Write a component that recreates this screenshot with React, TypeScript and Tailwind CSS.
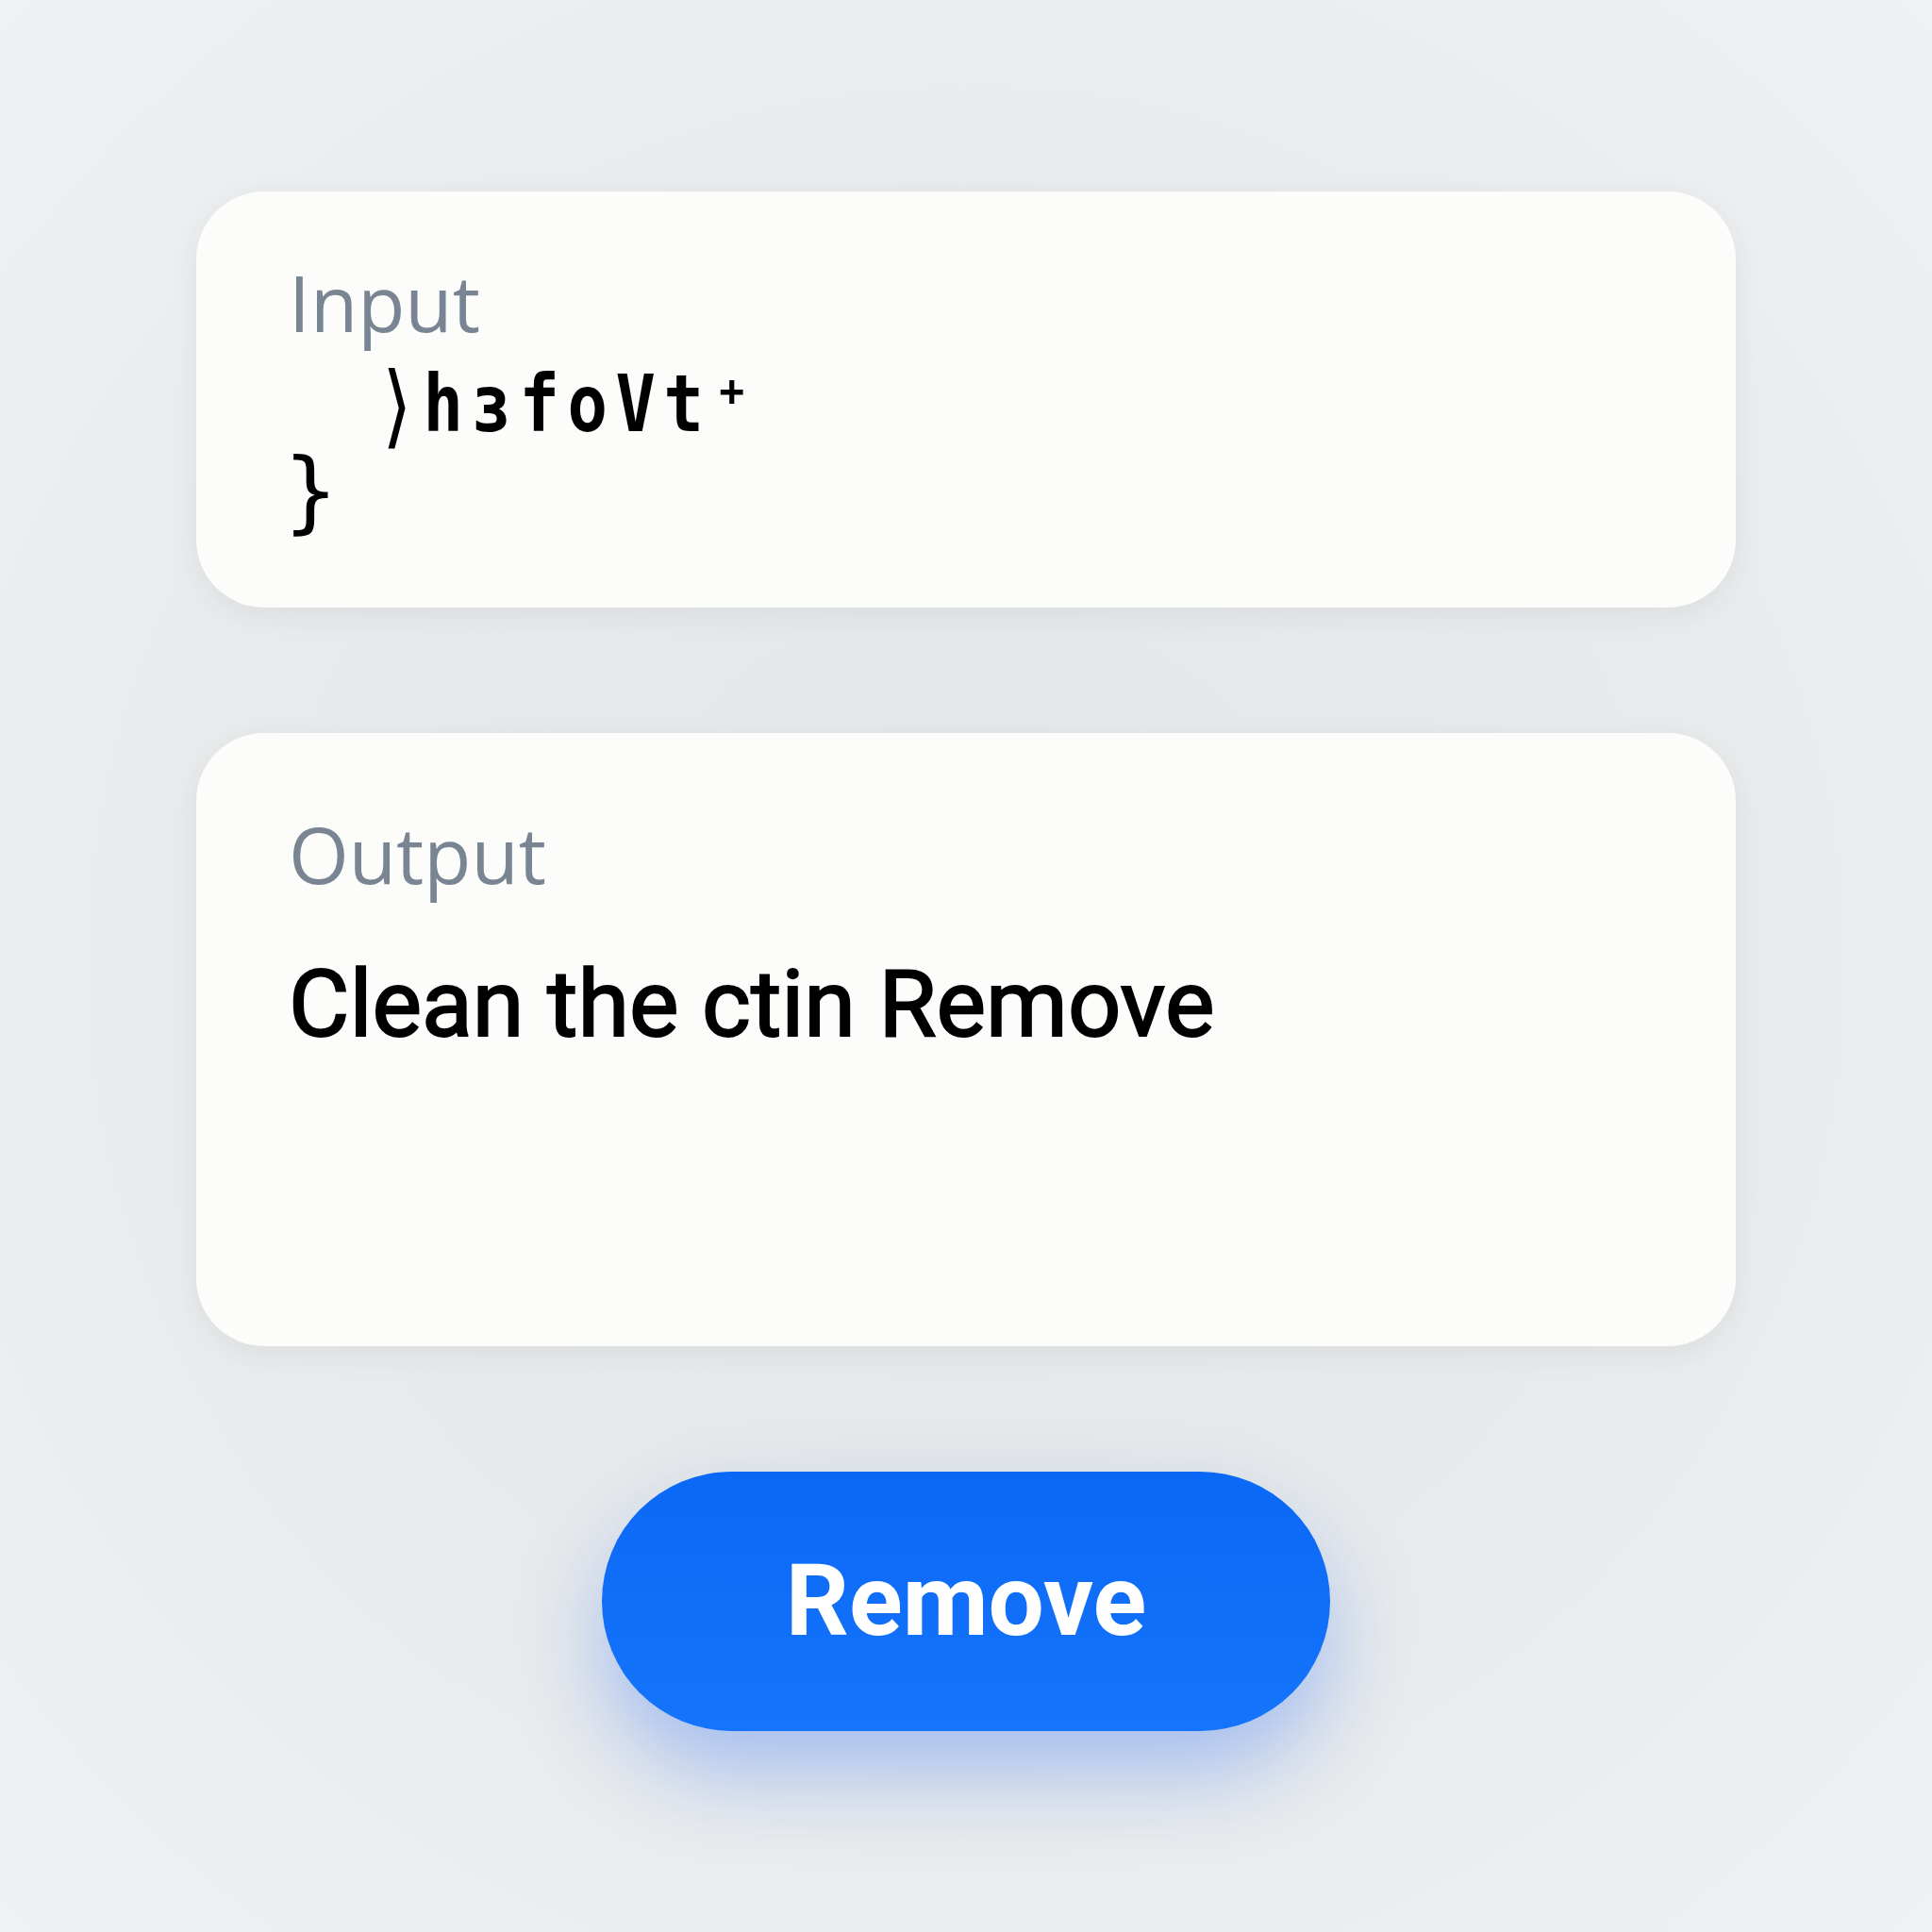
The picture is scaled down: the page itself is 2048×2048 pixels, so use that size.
import React from "react";

// Input / Output panel with a cleanup action button

const label = "font-['Open_Sans',sans-serif] text-[82px] leading-none text-[#7a8593]";

function Panel({ title, className, children }: { title: string; className: string; children: React.ReactNode }) {
  return (
    <section
      className={`w-[1632px] rounded-[72px] bg-[#fcfcfa] pl-[98px] shadow-[0_8px_30px_rgba(60,70,80,0.07)] ${className}`}
    >
      <h2 className={label}>{title}</h2>
      {children}
    </section>
  );
}

export default function App() {
  return (
    <div className="min-h-screen w-full flex flex-col items-center pt-[203px] bg-[radial-gradient(ellipse_at_center,#e4e6e7_0%,#e8eaeb_55%,#eff1f2_100%)]">
      {/* input */}
      <Panel title="Input" className="h-[441px] pt-[76px]">
        <div className="mt-[26px] ml-[90px] h-[83px] font-['DejaVu_Sans_Mono',monospace] font-bold text-[83px] leading-none text-black">
          <span className="inline-block origin-left scale-x-[0.85] tracking-[10px] whitespace-pre">
            <span className="inline-block translate-y-[6px] mr-[-6px] text-[96px] font-normal leading-[0]">⟩</span>hзfoVt⁺
          </span>
        </div>
        <div className="mt-[4px] -ml-[5px] font-['DejaVu_Sans_Mono',monospace] text-[94px] leading-none text-black">
          {"}"}
        </div>
      </Panel>

      {/* output */}
      <Panel title="Output" className="h-[650px] pt-[87px] mt-[133px]">
        <p className="mt-[69px] font-['Roboto',sans-serif] font-normal text-[99px] leading-none text-black [-webkit-text-stroke:2px_black]">
          Clean the ctin Remove
        </p>
      </Panel>

      <button className="mt-[133px] w-[772px] h-[275px] rounded-full bg-gradient-to-b from-[#0a68f6] to-[#1574fb] shadow-[0_45px_90px_rgba(40,110,245,0.35)] flex items-center justify-center font-['Roboto',sans-serif] font-bold text-[105px] leading-none text-white">
        Remove
      </button>
    </div>
  );
}
